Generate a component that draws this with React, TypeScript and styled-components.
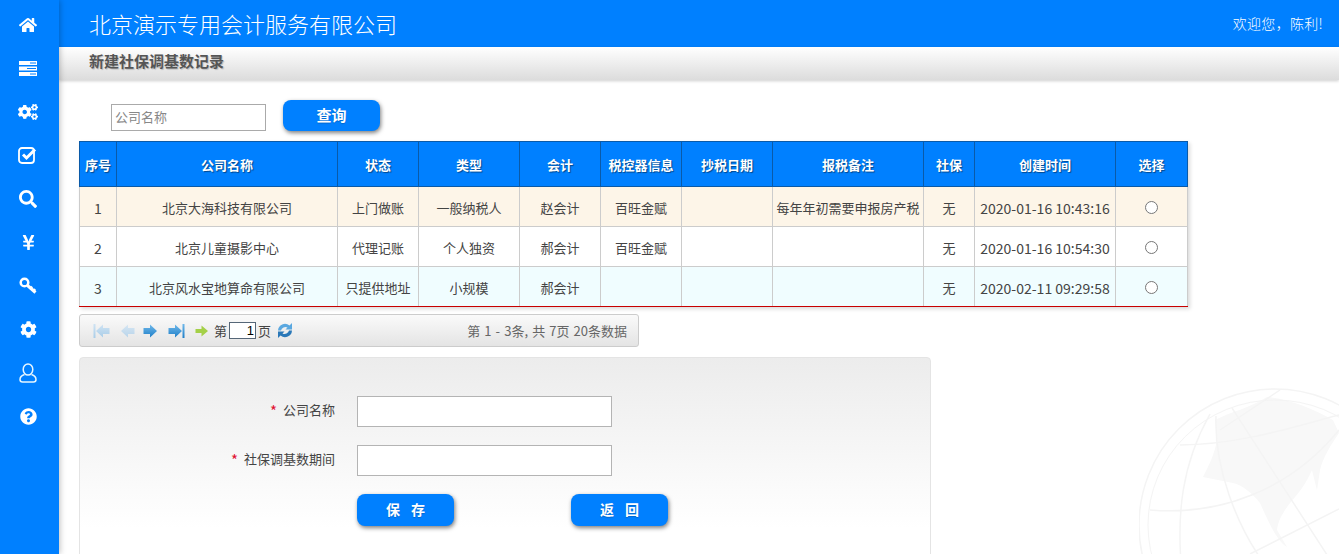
import React from "react";
import styled, { createGlobalStyle } from "styled-components";
import { FaHome, FaCogs, FaSearch, FaYenSign, FaCog, FaQuestionCircle } from "react-icons/fa";

const BLUE = "#0080ff";
const FONT = `"Noto Sans CJK SC", "Noto Sans", sans-serif`;

const GlobalStyle = createGlobalStyle`
	html, body {
		margin: 0;
		padding: 0;
		height: 100%;
		overflow: hidden;
		background: #fff;
	}
	* {
		box-sizing: border-box;
	}
`;

const Page = styled.div`
	position: relative;
	display: flex;
	width: 1339px;
	height: 554px;
	overflow: hidden;
	font-family: ${FONT};
	color: #444;
`;

const Sidebar = styled.nav`
	position: relative;
	z-index: 3;
	flex: 0 0 59px;
	display: flex;
	flex-direction: column;
	padding-top: 3px;
	background: ${BLUE};
	box-shadow: 1px 0 6px rgba(0, 0, 0, 0.25);
`;

const NavItem = styled.div`
	display: flex;
	align-items: center;
	justify-content: center;
	width: 56px;
	height: 43.5px;
	color: #fff;
	font-size: 18px;
`;

const Main = styled.div`
	flex: 1;
	display: flex;
	flex-direction: column;
	min-width: 0;
`;

const Header = styled.header`
	flex: 0 0 47px;
	display: flex;
	align-items: center;
	justify-content: space-between;
	padding: 0 16px 0 30px;
	background: ${BLUE};
	color: #fff;
`;

const Brand = styled.div`
	font-size: 22px;
	font-weight: 300;
	line-height: 45px;
`;

const Welcome = styled.div`
	font-size: 14px;
	font-weight: 300;
	letter-spacing: 0.3px;
	line-height: 45px;
`;

const SubHeader = styled.div`
	flex: 0 0 33px;
	position: relative;
	z-index: 2;
	padding-left: 30px;
	background: linear-gradient(#fff, #dcdcdc);
	box-shadow: 0 1px 3px rgba(0, 0, 0, 0.2);
	font-size: 15px;
	font-weight: 700;
	line-height: 28px;
	color: #555;
	text-shadow: 1px 1px 1px rgba(0, 0, 0, 0.2);
`;

const Content = styled.div`
	position: relative;
	z-index: 1;
	padding: 20px 0 0 20px;
`;

const SearchRow = styled.div`
	display: flex;
	align-items: flex-end;
	gap: 17px;
	height: 31px;
	padding-left: 32px;
`;

const SearchInput = styled.input`
	width: 155px;
	height: 27px;
	padding: 0 3px 2px;
	border: 1px solid #aaa;
	background: #fff;
	font-family: ${FONT};
	font-size: 13px;
	&::placeholder {
		color: #888;
	}
`;

const ActionButton = styled.button<{ $tall?: boolean }>`
	width: 97px;
	height: ${(props) => (props.$tall ? "32px" : "31px")};
	padding: 0 0 2px;
	border: none;
	border-radius: 8px;
	background: ${BLUE};
	box-shadow: 1px 2px 4px rgba(0, 0, 0, 0.5);
	color: #fff;
	font-family: ${FONT};
	font-size: ${(props) => (props.$tall ? "14px" : "15px")};
	font-weight: 700;
	word-spacing: ${(props) => (props.$tall ? "8px" : "0")};
	text-shadow: 0 1px 1px rgba(0, 0, 0, 0.2);
`;

const Table = styled.table`
	width: 1108px;
	margin-top: 10px;
	table-layout: fixed;
	border-collapse: collapse;
	box-shadow: 2px 2px 4px rgba(0, 0, 0, 0.15);
	font-size: 13px;
`;

const Th = styled.th`
	height: 45px;
	padding: 0;
	border: 1px solid #0a5aa8;
	background: ${BLUE};
	color: #fff;
	font-size: 13px;
	font-weight: 700;
	text-align: center;
	text-shadow: 1px 1px 1px rgba(0, 0, 0, 0.45);
`;

const Tr = styled.tr<{ $bg: string }>`
	background: ${(props) => props.$bg};
	&:last-child td {
		border-bottom: 1px solid #c80000;
	}
`;

const Td = styled.td<{ $large?: boolean }>`
	height: 40px;
	padding: 2px 0 0;
	border-left: 1px solid #ccc;
	border-right: 1px solid #ccc;
	border-top: 1px solid #ccc;
	font-size: ${(props) => (props.$large ? "14px" : "13px")};
	text-align: center;
	white-space: nowrap;
	overflow: hidden;
`;

const Radio = styled.input`
	width: 13px;
	height: 13px;
	margin: 0 0 3px;
	vertical-align: middle;
`;

const Pager = styled.div`
	display: flex;
	align-items: center;
	width: 560px;
	height: 33px;
	margin-top: 7px;
	padding: 0 11px 0 13px;
	border: 1px solid #ccc;
	border-radius: 3px;
	background: linear-gradient(#fafafa, #e4e4e4);
	font-size: 13px;
`;

const PagerIcon = styled.svg`
	flex: none;
`;

const PageInput = styled.input`
	width: 27px;
	height: 17px;
	margin: 0 2px 0 2px;
	padding: 0 1px;
	border: 1px solid #567;
	background: #fff;
	font-family: "Liberation Sans", sans-serif;
	font-size: 13px;
	text-align: right;
	color: #000;
`;

const PagerSummary = styled.span`
	margin-left: auto;
	color: #666;
	word-spacing: 1.2px;
`;

const Panel = styled.section`
	width: 852px;
	height: 230px;
	margin-top: 10px;
	padding-top: 38px;
	border: 1px solid #e4e4e4;
	border-radius: 4px;
	background: linear-gradient(#ececec, #fff 170px);
`;

const FormRow = styled.div`
	display: grid;
	grid-template-columns: 255px 255px;
	column-gap: 22px;
	align-items: center;
	height: 31px;
	margin-bottom: 18px;
`;

const Label = styled.label`
	font-size: 13px;
	text-align: right;
	color: #444;
	line-height: 27px;
	align-self: start;
`;

const Star = styled.span`
	margin-right: 6px;
	font-size: 15px;
	line-height: 1;
	vertical-align: -2px;
	color: #e01030;
`;

const TextInput = styled.input`
	height: 31px;
	border: 1px solid #b4b4b4;
	background: #fff;
`;

const FormActions = styled.div`
	display: flex;
	gap: 117px;
	padding-left: 277px;
`;

const Globe = styled.svg`
	position: absolute;
	right: 0;
	bottom: 0;
	z-index: 0;
`;

const navIcons = [
	<FaHome key="home" />,
	<svg key="server" width="18" height="15" viewBox="0 0 18 15" fill="#fff">
		<path d="M0 0h18v4H0zM0 5.500h18v4H0zM0 11h18v4H0z" />
		<path d="M11 1.500h6v1h-6zM8 7h9v1H8zM11 12.500h6v1h-6z" fill={BLUE} />
	</svg>,
	<FaCogs key="cogs" style={{ fontSize: 20 }} />,
	<svg key="check" width="20" height="18" viewBox="0 0 20 18" fill="none" stroke="#fff">
		<rect x="1" y="2" width="15" height="15" rx="3" strokeWidth="1.800" />
		<path d="M5 8.500l3.500 3.500L17 3.500" strokeWidth="3" />
	</svg>,
	<FaSearch key="search" />,
	<FaYenSign key="yen" style={{ fontSize: 17 }} />,
	<svg key="key" width="18" height="18" viewBox="0 0 18 18" fill="none" stroke="#fff">
		<circle cx="5.500" cy="5.500" r="3.800" strokeWidth="2.500" />
		<path d="M8.500 8.500l8 7" strokeWidth="3" />
		<path d="M13 9.500l-1.500 2M16 12l-1.500 2" strokeWidth="2.500" />
	</svg>,
	<FaCog key="cog" style={{ fontSize: 17 }} />,
	<svg key="user" width="18" height="20" viewBox="0 0 18 20" fill="none" stroke="#e6f6ff" strokeWidth="1.500">
		<ellipse cx="9" cy="6.500" rx="4.800" ry="5.500" />
		<path d="M5.500 11.500C2.500 12.500 1 14 1 16.500 1 18 2 19 3.500 19h11c1.500 0 2.500-1 2.500-2.500 0-2.500-1.500-4-4.500-5" />
	</svg>,
	<FaQuestionCircle key="help" style={{ fontSize: 17 }} />,
];

const colWidths = [37, 221, 81, 101, 81, 81, 91, 151, 51, 141, 72];
const headings = [
	"序号",
	"公司名称",
	"状态",
	"类型",
	"会计",
	"税控器信息",
	"抄税日期",
	"报税备注",
	"社保",
	"创建时间",
	"选择",
];

const rows = [
	{
		bg: "#fdf5e8",
		cells: ["1", "北京大海科技有限公司", "上门做账", "一般纳税人", "赵会计", "百旺金赋", "", "每年年初需要申报房产税", "无", "2020-01-16 10:43:16"],
	},
	{
		bg: "#ffffff",
		cells: ["2", "北京儿童摄影中心", "代理记账", "个人独资", "郝会计", "百旺金赋", "", "", "无", "2020-01-16 10:54:30"],
	},
	{
		bg: "#f0fdff",
		cells: ["3", "北京风水宝地算命有限公司", "只提供地址", "小规模", "郝会计", "", "", "", "无", "2020-02-11 09:29:58"],
	},
];

const Arrow: React.FC<{ dir: "left" | "right"; bar?: boolean; top: string; bottom: string }> = ({
	dir,
	bar,
	top,
	bottom,
}) => {
	const id = `arrow-${dir}-${bar ? "bar" : "plain"}`;
	return (
		<PagerIcon width="17" height="16" viewBox="0 0 17 16" style={{ marginRight: 8 }}>
			<defs>
				<linearGradient id={id} x1="0" y1="0" x2="0" y2="1">
					<stop offset="0" stopColor={top} />
					<stop offset="1" stopColor={bottom} />
				</linearGradient>
			</defs>
			<g transform={dir === "left" ? "translate(17 0) scale(-1 1)" : undefined} fill={`url(#${id})`}>
				<path d="M0.500 5h6.500V1.500L14 8l-7 6.500V11H0.500z" />
				{bar && <path d="M14.500 1h2v14h-2z" />}
			</g>
		</PagerIcon>
	);
};

const App: React.FC = () => (
	<Page>
		<GlobalStyle />
		<Globe width="200" height="167" viewBox="1139 387 200 167" fill="none">
			<path
				d="M1215 420c15-8 35-12 52-23 22 2 46 12 66 23l6 13c-8 12-16 24-19 37l-3 20-5-20c-6 14-14 24-22 33-6 8-12 17-13 27l10 17c-10-6-18-24-27-44-8-10-18-18-27-20l-30-6c6-12 12-24 14-37z"
				fill="#f8f8f8"
			/>
			<g stroke="#f4f4f4" strokeWidth="1.500">
				<circle cx="1275" cy="525" r="136" />
				<ellipse cx="1275" cy="525" rx="127" ry="125" strokeWidth="1" />
				<path d="M1210 414c-28 50-34 100-28 160" />
				<path d="M1216 416c-2 50 20 110 50 150" />
				<path d="M1232 408l110 170" />
				<path d="M1280 390l-60 40" />
				<path d="M1150 510c70 6 140-20 189-80" />
				<path d="M1180 445c60 0 120-20 159-30" />
				<path d="M1250 554l89-45" />
			</g>
		</Globe>
		<Sidebar>
			{navIcons.map((icon) => (
				<NavItem key={icon.key}>{icon}</NavItem>
			))}
		</Sidebar>
		<Main>
			<Header>
				<Brand>北京演示专用会计服务有限公司</Brand>
				<Welcome>欢迎您，陈利!</Welcome>
			</Header>
			<SubHeader>新建社保调基数记录</SubHeader>
			<Content>
				<SearchRow>
					<SearchInput placeholder="公司名称" />
					<ActionButton>查询</ActionButton>
				</SearchRow>
				<Table>
					<colgroup>
						{colWidths.map((w, i) => (
							<col key={i} width={w} />
						))}
					</colgroup>
					<thead>
						<tr>
							{headings.map((h) => (
								<Th key={h}>{h}</Th>
							))}
						</tr>
					</thead>
					<tbody>
						{rows.map((row, i) => (
							<Tr key={i} $bg={row.bg}>
								{row.cells.map((cell, j) => (
									<Td key={j} $large={j === 0 || j === 9}>
										{cell}
									</Td>
								))}
								<Td>
									<Radio type="radio" name="pick" />
								</Td>
							</Tr>
						))}
					</tbody>
				</Table>
				<Pager>
					<Arrow dir="left" bar top="#cfe3f3" bottom="#a9cde8" />
					<Arrow dir="left" top="#d6e6f3" bottom="#b8d4ea" />
					<Arrow dir="right" top="#6fb8ea" bottom="#1f7fc8" />
					<Arrow dir="right" bar top="#6fb8ea" bottom="#1f7fc8" />
					<PagerIcon width="14" height="14" viewBox="0 0 14 14" style={{ margin: "0 5px 0 2px" }}>
						<path d="M0.500 5h6V1.500L13 7l-6.500 5.500V9h-6z" fill="#a4d048" />
					</PagerIcon>
					第
					<PageInput defaultValue="1" />页
					<PagerIcon width="16" height="17" viewBox="0 0 16 16" style={{ margin: "0 0 0 6px" }}>
						<path d="M1 8a7 7 0 0 1 11.500-5L15 0.500V7H8.500l2-2A4.500 4.500 0 0 0 4 8z" fill="#5aa8e0" />
						<path d="M15 8a7 7 0 0 1-11.500 5L1 15.500V9h6.500l-2 2A4.500 4.500 0 0 0 12 8z" fill="#2a78b8" />
					</PagerIcon>
					<PagerSummary>第 1 - 3条, 共 7页 20条数据</PagerSummary>
				</Pager>
				<Panel>
					<FormRow>
						<Label>
							<Star>*</Star>公司名称
						</Label>
						<TextInput />
					</FormRow>
					<FormRow>
						<Label>
							<Star>*</Star>社保调基数期间
						</Label>
						<TextInput />
					</FormRow>
					<FormActions>
						<ActionButton $tall>保 存</ActionButton>
						<ActionButton $tall>返 回</ActionButton>
					</FormActions>
				</Panel>
			</Content>
		</Main>
	</Page>
);

export default App;
